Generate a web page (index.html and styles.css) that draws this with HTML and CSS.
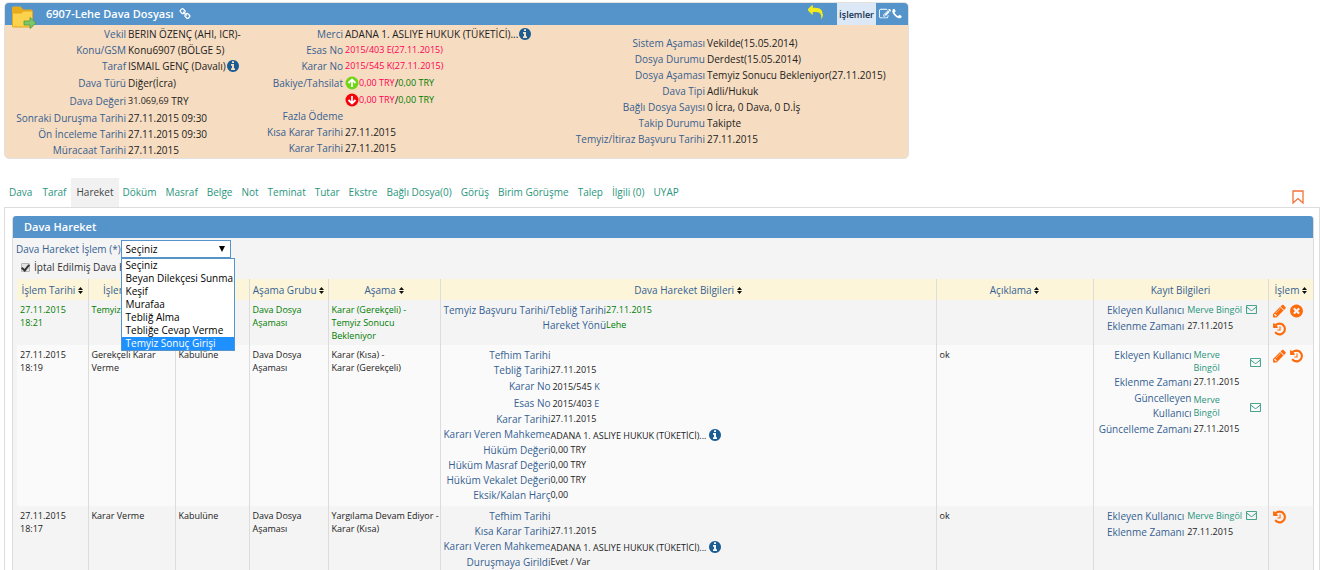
FILE: index.html
```html
<!DOCTYPE html>
<html lang="tr">
<head>
  <meta charset="UTF-8" />
  <title>6907-Lehe Dava Dosyası</title>
  <link rel="stylesheet" href="styles.css">
</head>
<body>

  <!-- Icons -->
  <svg class="sprite" xmlns="http://www.w3.org/2000/svg">
    <symbol id="i-link" viewBox="0 0 1792 1792"><path d="M1520 1216q0-40-28-68l-208-208q-28-28-68-28-42 0-72 32 3 3 19 18.5t21.5 21.5 15 19 13 25.5 3.5 27.5q0 40-28 68t-68 28q-15 0-27.5-3.5t-25.5-13-19-15-21.5-21.5-18.5-19q-33 31-33 73 0 40 28 68l206 207q27 27 68 27 40 0 68-26l147-146q28-28 28-67zm-703-705q0-40-28-68l-206-207q-28-28-68-28-39 0-68 27l-147 146q-28 28-28 67 0 40 28 68l208 208q27 27 68 27 42 0 72-31-3-3-19-18.5t-21.5-21.5-15-19-13-25.5-3.5-27.5q0-40 28-68t68-28q15 0 27.5 3.5t25.5 13 19 15 21.5 21.5 18.5 19q33-31 33-73zm895 705q0 120-85 203l-147 146q-83 83-203 83-121 0-204-85l-206-207q-83-83-83-203 0-123 88-209l-88-88q-86 88-208 88-120 0-204-84l-208-208q-84-84-84-204t85-203l147-146q83-83 203-83 121 0 204 85l206 207q83 83 83 203 0 123-88 209l88 88q86-88 208-88 120 0 204 84l208 208q84 84 84 204z"/></symbol>
    <symbol id="i-reply" viewBox="0 0 1792 1792"><path d="M1792 1120q0 166-127 451-3 7-10.5 24t-13.5 30-13 22q-12 17-28 17-15 0-23.5-10t-8.5-25q0-9 2.5-26.5t2.5-23.5q5-68 5-123 0-112-19.5-200.5t-54-153.5-89-112-117-80-145.5-48.5-166-24-187.5-7h-224v256q0 26-19 45t-45 19-45-19l-512-512q-19-19-19-45t19-45l512-512q19-19 45-19t45 19 19 45v256h224q713 0 875 403 53 134 53 333z"/></symbol>
    <symbol id="i-edit" viewBox="0 0 1792 1792"><path d="M888 1184l116-116-152-152-116 116v56h96v96h56zm440-720q-16-16-33 1l-350 350q-17 17-1 33t33-1l350-350q17-17 1-33zm80 594v190q0 119-84.500 203.500t-203.500 84.500h-832q-119 0-203.500-84.500t-84.500-203.500v-832q0-119 84.500-203.500t203.500-84.500h832q63 0 117 25 15 7 18 23 3 17-9 29l-49 49q-14 14-32 8-23-6-45-6h-832q-66 0-113 47t-47 113v832q0 66 47 113t113 47h832q66 0 113-47t47-113v-126q0-13 9-22l64-64q15-15 35-7t20 29zm-96-738l288 288-672 672h-288v-288zm444 132l-92 92-288-288 92-92q28-28 68-28t68 28l152 152q28 28 28 68t-28 68z"/></symbol>
    <symbol id="i-phone" viewBox="0 0 1792 1792"><path d="M1600 1240q0 27-10 70.500t-21 68.500q-21 50-122 106-94 51-186 51-27 0-53-3.500t-57.500-12.500-47-14.500-55.500-20.500-49-18q-98-35-175-83-127-79-264-216t-216-264q-48-77-83-175-3-9-18-49t-20.500-55.500-14.500-47-12.500-57.500-3.500-53q0-92 51-186 56-101 106-122 25-11 68.500-21t70.500-10q14 0 21 3 18 6 53 76 11 19 30 54t35 63.500 31 53.500q3 4 17.500 25t21.500 35.500 7 28.500q0 20-28.500 50t-62 55-62 53-28.500 46q0 9 5 22.500t8.500 20.500 14 24 11.500 19q76 137 174 235t235 174q2 1 19 11.500t24 14 20.500 8.500 22.500 5q18 0 46-28.500t53-62 55-62 50-28.500q14 0 28.500 7t35.500 21.500 25 17.500q25 15 53.500 31t63.500 35 54 30q70 35 76 53 3 7 3 21z"/></symbol>
    <symbol id="i-info" viewBox="0 0 1792 1792"><path d="M1152 1376v-160q0-14-9-23t-23-9h-96v-512q0-14-9-23t-23-9h-320q-14 0-23 9t-9 23v160q0 14 9 23t23 9h96v320h-96q-14 0-23 9t-9 23v160q0 14 9 23t23 9h448q14 0 23-9t9-23zm-128-896v-160q0-14-9-23t-23-9h-192q-14 0-23 9t-9 23v160q0 14 9 23t23 9h192q14 0 23-9t9-23zm640 416q0 209-103 385.500t-279.500 279.500-385.500 103-385.500-103-279.500-279.500-103-385.500 103-385.500 279.500-279.500 385.500-103 385.500 103 279.500 279.500 103 385.500z"/></symbol>
    <symbol id="i-pencil" viewBox="0 0 1792 1792"><path d="M491 1536l91-91-235-235-91 91v107h128v128h107zm523-928q0-22-22-22-10 0-17 7l-542 542q-7 7-7 17 0 22 22 22 10 0 17-7l542-542q7-7 7-17zm-54-192l416 416-832 832h-416v-416zm683 96q0 53-37 90l-166 166-416-416 166-165q36-38 90-38 53 0 91 38l235 234q37 39 37 91z"/></symbol>
    <symbol id="i-times" viewBox="0 0 1792 1792"><path d="M1277 1122q0-26-19-45l-181-181 181-181q19-19 19-45 0-27-19-46l-90-90q-19-19-46-19-26 0-45 19l-181 181-181-181q-19-19-45-19-27 0-46 19l-90 90q-19 19-19 46 0 26 19 45l181 181-181 181q-19 19-19 45 0 27 19 46l90 90q19 19 46 19 26 0 45-19l181-181 181 181q19 19 45 19 27 0 46-19l90-90q19-19 19-46zm387-226q0 209-103 385.500t-279.500 279.500-385.500 103-385.500-103-279.500-279.500-103-385.500 103-385.500 279.500-279.500 385.500-103 385.500 103 279.500 279.500 103 385.500z"/></symbol>
    <symbol id="i-history" viewBox="0 0 1792 1792"><path d="M1664 896q0 156-61 298t-164 245-245 164-298 61q-172 0-327-72.500t-264-204.500q-7-10-6.500-22.500t8.500-20.500l137-138q10-9 25-9 16 2 23 12 73 95 179 147t225 52q104 0 198.500-40.500t163.500-109.500 109.500-163.500 40.500-198.500-40.500-198.500-109.500-163.500-163.500-109.500-198.500-40.500q-98 0-188 35.500t-160 101.500l137 138q31 30 14 69-17 40-59 40h-448q-26 0-45-19t-19-45v-448q0-42 40-59 39-17 69 14l130 129q107-101 244.500-156.500t284.500-55.500q156 0 298 61t245 164 164 245 61 298zm-640-288v448q0 14-9 23t-23 9h-320q-14 0-23-9t-9-23v-64q0-14 9-23t23-9h224v-352q0-14 9-23t23-9h64q14 0 23 9t9 23z"/></symbol>
    <symbol id="i-up" viewBox="0 0 14 14"><circle cx="7" cy="7" r="6.500"/><path d="M7 11V4M3.500 7L7 3.500 10.500 7" fill="none" stroke="#fff" stroke-width="1.800"/></symbol>
    <symbol id="i-down" viewBox="0 0 14 14"><circle cx="7" cy="7" r="6.500"/><path d="M7 3v7M3.500 7L7 10.500 10.500 7" fill="none" stroke="#fff" stroke-width="1.800"/></symbol>
    <symbol id="i-mail" viewBox="0 0 12 10"><path d="M.5.5h11v9H.5zM1 2.500l4 3.200q1 .8 2 0l4-3.200" fill="none" stroke="currentColor"/></symbol>
    <symbol id="i-sort" viewBox="0 0 5 7"><path d="M0 3L2.500 0 5 3zM0 4h5L2.500 7z"/></symbol>
    <symbol id="i-bookmark" viewBox="0 0 12 14"><path d="M1 1h10v12L6 8.500 1 13z" fill="none" stroke="currentColor" stroke-width="1.300"/></symbol>
    <symbol id="i-folder" viewBox="0 0 26 24">
      <path d="M1 3q0-1.500 1.500-1.500h7l2.500 3h8q1.500 0 1.500 1.500v15H1z" fill="#e9ad1c"/>
      <path d="M1.500 8h8.500l2.500-2h9v15q0 1-1 1h-18q-1 0-1-1z" fill="#fdd34e" stroke="#e2a51b"/>
      <path d="M13 16h6v-3.500l6 5.500-6 5.500v-3.500h-6z" fill="#7ec768" stroke="#4c9a47" stroke-width=".8"/>
    </symbol>
  </svg>

  <!-- Dosya özeti -->
  <section class="card">
    <header class="bar card-bar">
      <svg class="folder"><use href="#i-folder"/></svg>
      <h1>6907-Lehe Dava Dosyası</h1>
      <a href="#" title="Bağlantı"><svg class="icon"><use href="#i-link"/></svg></a>
      <div class="card-tools">
        <a href="#" class="back" title="Geri"><svg class="icon big"><use href="#i-reply"/></svg></a>
        <button type="button" class="menu-btn">İşlemler</button>
        <a href="#" title="Düzenle"><svg class="icon"><use href="#i-edit"/></svg></a>
        <a href="#" title="Ara"><svg class="icon"><use href="#i-phone"/></svg></a>
      </div>
    </header>
    <div class="card-body">
      <dl class="fields">
        <div><dt>Vekil</dt><dd>BERIN ÖZENÇ (AHI, ICR)-</dd></div>
        <div><dt>Konu/GSM</dt><dd>Konu6907 (BÖLGE 5)</dd></div>
        <div><dt>Taraf</dt><dd>ISMAIL GENÇ (Davalı) <svg class="icon info"><use href="#i-info"/></svg></dd></div>
        <div class="tall"><dt>Dava Türü</dt><dd>Diğer(İcra)</dd></div>
        <div class="tall"><dt>Dava Değeri</dt><dd><small>31.069,69</small>&nbsp;TRY</dd></div>
        <div><dt>Sonraki Duruşma Tarihi</dt><dd>27.11.2015 09:30</dd></div>
        <div><dt>Ön İnceleme Tarihi</dt><dd>27.11.2015 09:30</dd></div>
        <div><dt>Müracaat Tarihi</dt><dd>27.11.2015</dd></div>
      </dl>
      <dl class="fields fields-mid">
        <div><dt>Merci</dt><dd>ADANA 1. ASLIYE HUKUK (TÜKETİCİ)...<svg class="icon info"><use href="#i-info"/></svg></dd></div>
        <div><dt>Esas No</dt><dd class="pink"><small>2015/403 E(27.11.2015)</small></dd></div>
        <div><dt>Karar No</dt><dd class="pink"><small>2015/545 K(27.11.2015)</small></dd></div>
        <div class="tall"><dt>Bakiye/Tahsilat</dt><dd><svg class="icon info up"><use href="#i-up"/></svg><small class="pink">0,00 TRY</small>/<small class="green">0,00 TRY</small></dd></div>
        <div><dt></dt><dd><svg class="icon info down"><use href="#i-down"/></svg><small class="pink">0,00 TRY</small>/<small class="green">0,00 TRY</small></dd></div>
        <div><dt>Fazla Ödeme</dt><dd></dd></div>
        <div><dt>Kısa Karar Tarihi</dt><dd>27.11.2015</dd></div>
        <div><dt>Karar Tarihi</dt><dd>27.11.2015</dd></div>
      </dl>
      <dl class="fields fields-end">
        <div><dt>Sistem Aşaması</dt><dd>Vekilde(15.05.2014)</dd></div>
        <div><dt>Dosya Durumu</dt><dd>Derdest(15.05.2014)</dd></div>
        <div><dt>Dosya Aşaması</dt><dd>Temyiz Sonucu Bekleniyor(27.11.2015)</dd></div>
        <div><dt>Dava Tipi</dt><dd>Adli/Hukuk</dd></div>
        <div><dt>Bağlı Dosya Sayısı</dt><dd>0 İcra, 0 Dava, 0 D.İş</dd></div>
        <div><dt>Takip Durumu</dt><dd>Takipte</dd></div>
        <div><dt>Temyiz/İtiraz Başvuru Tarihi</dt><dd>27.11.2015</dd></div>
      </dl>
    </div>
  </section>

  <!-- Sekmeler -->
  <nav class="tabs">
    <a href="#">Dava</a>
    <a href="#">Taraf</a>
    <a href="#" class="active">Hareket</a>
    <a href="#">Döküm</a>
    <a href="#">Masraf</a>
    <a href="#">Belge</a>
    <a href="#">Not</a>
    <a href="#">Teminat</a>
    <a href="#">Tutar</a>
    <a href="#">Ekstre</a>
    <a href="#">Bağlı Dosya(0)</a>
    <a href="#">Görüş</a>
    <a href="#">Birim Görüşme</a>
    <a href="#">Talep</a>
    <a href="#">İlgili (0)</a>
    <a href="#">UYAP</a>
    <a href="#" class="bookmark" title="İşaretle"><svg><use href="#i-bookmark"/></svg></a>
  </nav>

  <main class="pane">
    <section class="panel">
      <header class="bar"><h2>Dava Hareket</h2></header>

      <form class="filter">
        <div class="filter-row">
          <label for="islem">Dava Hareket İşlem (*)</label>
          <div class="combo">
            <select id="islem">
              <option>Seçiniz</option>
              <option>Beyan Dilekçesi Sunma</option>
              <option>Keşif</option>
              <option>Murafaa</option>
              <option>Tebliğ Alma</option>
              <option>Tebliğe Cevap Verme</option>
              <option>Temyiz Sonuç Girişi</option>
            </select>
            <ul class="combo-list" role="listbox">
              <li role="option">Seçiniz</li>
              <li role="option">Beyan Dilekçesi Sunma</li>
              <li role="option">Keşif</li>
              <li role="option">Murafaa</li>
              <li role="option">Tebliğ Alma</li>
              <li role="option">Tebliğe Cevap Verme</li>
              <li role="option" class="hover" aria-selected="true">Temyiz Sonuç Girişi</li>
            </ul>
          </div>
        </div>
        <div class="filter-row check">
          <input type="checkbox" id="iptal" checked />
          <label for="iptal">İptal Edilmiş Dava Hareketleri</label>
        </div>
      </form>

      <table class="grid">
        <colgroup>
          <col class="c-date"><col class="c-op"><col class="c-res"><col class="c-group"><col class="c-stage">
          <col><col class="c-note"><col class="c-log"><col class="c-act">
        </colgroup>
        <thead>
          <tr>
            <th>İşlem Tarihi <svg class="sort"><use href="#i-sort"/></svg></th>
            <th>İşlem Türü <svg class="sort"><use href="#i-sort"/></svg></th>
            <th>Sonucu <svg class="sort"><use href="#i-sort"/></svg></th>
            <th>Aşama Grubu <svg class="sort"><use href="#i-sort"/></svg></th>
            <th>Aşama <svg class="sort"><use href="#i-sort"/></svg></th>
            <th>Dava Hareket Bilgileri <svg class="sort"><use href="#i-sort"/></svg></th>
            <th>Açıklama <svg class="sort"><use href="#i-sort"/></svg></th>
            <th>Kayıt Bilgileri</th>
            <th>İşlem <svg class="sort"><use href="#i-sort"/></svg></th>
          </tr>
        </thead>
        <tbody>
          <tr class="new">
            <td>27.11.2015 18:21</td>
            <td>Temyiz</td>
            <td></td>
            <td>Dava Dosya Aşaması</td>
            <td>Karar (Gerekçeli) -<br>Temyiz Sonucu<br>Bekleniyor</td>
            <td>
              <dl class="detail">
                <dt>Temyiz Başvuru Tarihi/Tebliğ Tarihi</dt><dd>27.11.2015</dd>
                <dt>Hareket Yönü</dt><dd>Lehe</dd>
              </dl>
            </td>
            <td></td>
            <td>
              <dl class="log">
                <dt>Ekleyen Kullanıcı</dt><dd class="user"><a href="#">Merve Bingöl</a><svg class="mail"><use href="#i-mail"/></svg></dd>
                <dt>Eklenme Zamanı</dt><dd>27.11.2015</dd>
              </dl>
            </td>
            <td>
              <div class="acts">
                <a href="#" title="Düzenle"><svg><use href="#i-pencil"/></svg></a>
                <a href="#" title="İptal"><svg><use href="#i-times"/></svg></a>
                <a href="#" title="Geçmiş"><svg><use href="#i-history"/></svg></a>
              </div>
            </td>
          </tr>
          <tr>
            <td>27.11.2015 18:19</td>
            <td>Gerekçeli Karar Verme</td>
            <td>Kabulüne</td>
            <td>Dava Dosya Aşaması</td>
            <td>Karar (Kısa) -<br>Karar (Gerekçeli)</td>
            <td>
              <dl class="detail">
                <dt>Tefhim Tarihi</dt><dd></dd>
                <dt>Tebliğ Tarihi</dt><dd>27.11.2015</dd>
                <dt class="no">Karar No</dt><dd class="no">2015/545 <b>K</b></dd>
                <dt class="no">Esas No</dt><dd class="no">2015/403 <b>E</b></dd>
                <dt>Karar Tarihi</dt><dd>27.11.2015</dd>
                <dt>Kararı Veren Mahkeme</dt><dd class="court">ADANA 1. ASLIYE HUKUK (TÜKETİCİ)...<svg class="icon info"><use href="#i-info"/></svg></dd>
                <dt>Hüküm Değeri</dt><dd>0,00 TRY</dd>
                <dt>Hüküm Masraf Değeri</dt><dd>0,00 TRY</dd>
                <dt>Hüküm Vekalet Değeri</dt><dd>0,00 TRY</dd>
                <dt>Eksik/Kalan Harç</dt><dd>0,00</dd>
              </dl>
            </td>
            <td>ok</td>
            <td>
              <dl class="log wide">
                <dt>Ekleyen Kullanıcı</dt><dd class="user"><a href="#">Merve Bingöl</a><svg class="mail"><use href="#i-mail"/></svg></dd>
                <dt>Eklenme Zamanı</dt><dd>27.11.2015</dd>
                <dt>Güncelleyen Kullanıcı</dt><dd class="user"><a href="#">Merve Bingöl</a><svg class="mail"><use href="#i-mail"/></svg></dd>
                <dt>Güncelleme Zamanı</dt><dd>27.11.2015</dd>
              </dl>
            </td>
            <td>
              <div class="acts">
                <a href="#" title="Düzenle"><svg><use href="#i-pencil"/></svg></a>
                <a href="#" title="Geçmiş"><svg><use href="#i-history"/></svg></a>
              </div>
            </td>
          </tr>
          <tr>
            <td>27.11.2015 18:17</td>
            <td>Karar Verme</td>
            <td>Kabulüne</td>
            <td>Dava Dosya Aşaması</td>
            <td>Yargılama Devam Ediyor -<br>Karar (Kısa)</td>
            <td>
              <dl class="detail">
                <dt>Tefhim Tarihi</dt><dd></dd>
                <dt>Kısa Karar Tarihi</dt><dd>27.11.2015</dd>
                <dt>Kararı Veren Mahkeme</dt><dd class="court">ADANA 1. ASLIYE HUKUK (TÜKETİCİ)...<svg class="icon info"><use href="#i-info"/></svg></dd>
                <dt>Duruşmaya Girildi</dt><dd>Evet / Var</dd>
              </dl>
            </td>
            <td>ok</td>
            <td>
              <dl class="log">
                <dt>Ekleyen Kullanıcı</dt><dd class="user"><a href="#">Merve Bingöl</a><svg class="mail"><use href="#i-mail"/></svg></dd>
                <dt>Eklenme Zamanı</dt><dd>27.11.2015</dd>
              </dl>
            </td>
            <td>
              <div class="acts">
                <a href="#" title="Geçmiş"><svg><use href="#i-history"/></svg></a>
              </div>
            </td>
          </tr>
        </tbody>
      </table>
    </section>
  </main>

</body>
</html>
```
FILE: styles.css
```css
* {
  box-sizing: border-box;
}

body {
  margin: 0;
  padding: 2px 0 0 4px;
  height: 100vh;
  overflow: hidden;
  background: #fff;
  color: #222;
  font: 10px/16px "Open Sans", "Noto Sans", sans-serif;
}

h1, h2, dl, dd, ul {
  margin: 0;
  padding: 0;
}

a {
  color: #2a957c;
  text-decoration: none;
}

small {
  font-size: 9px;
}

.sprite {
  position: absolute;
  width: 0;
  height: 0;
}

.icon {
  width: 12px;
  height: 12px;
  fill: currentColor;
  vertical-align: middle;
}

.info {
  width: 14px;
  height: 14px;
  fill: #1b5c92;
}

.up { fill: #6fd616; }
.down { fill: #fb0007; }
.pink { color: #ff0055; }
.green { color: #007d00; }

/* Mavi başlık */
.bar {
  display: flex;
  align-items: center;
  height: 22px;
  background: #5594cb;
  color: #fff;
}

.bar h1,
.bar h2 {
  font-size: 11px;
  font-weight: 600;
}

.bar a {
  display: flex;
  color: #fff;
}

/* Dosya özeti */
.card {
  width: 69%;
  max-width: 905px;
  background: #f6dcc0;
  border: 1px solid #e2e2e2;
  border-radius: 5px;
  overflow: hidden;
}

.card-bar {
  gap: 5px;
  padding-left: 6px;
}

.folder {
  align-self: flex-start;
  flex: none;
  width: 26px;
  height: 24px;
  margin: 2px 4px 0 0;
  position: relative;
  z-index: 1;
}

.card-tools {
  display: flex;
  align-items: center;
  align-self: stretch;
  margin-left: auto;
  padding-right: 5px;
}

.bar .back {
  color: #f2ec1c;
  margin: 0 14px 4px 0;
}

.big {
  width: 15px;
  height: 15px;
}

.menu-btn {
  align-self: stretch;
  margin-right: 3px;
  padding: 0 1px;
  width: 39px;
  border: 0;
  background: #dce8f5;
  color: #16324f;
  font: 600 9px "Open Sans", "Noto Sans", sans-serif;
}

.card-body {
  display: grid;
  grid-template-columns: 240px 325px 1fr;
  padding-top: 1px;
}

.fields > div {
  display: grid;
  grid-template-columns: 121px 1fr;
  column-gap: 2px;
  height: 16px;
}

.fields > .tall {
  height: 18px;
  line-height: 18px;
}

.fields dt {
  color: #365f92;
  white-space: nowrap;
  justify-self: end;
}

.fields dd {
  display: flex;
  align-items: center;
  white-space: nowrap;
}

.fields .info {
  flex: none;
}

.fields-mid > div {
  grid-template-columns: 98px 1fr;
}

.fields-end {
  padding-top: 9px;
}

.fields-end > div {
  grid-template-columns: 135px 1fr;
}

/* Sekmeler */
.tabs {
  display: flex;
  align-items: flex-end;
  margin-top: 19px;
}

.tabs a {
  padding: 0 5px;
  line-height: 29px;
}

.tabs .active {
  background: #f1f1f1;
  color: #444;
}

.tabs .active ~ a {
  padding-left: 4px;
}

.tabs .bookmark {
  display: flex;
  margin-left: auto;
  padding: 0 16px 3px 0;
  color: #f4713a;
}

.bookmark svg {
  width: 12px;
  height: 14px;
}

.pane {
  padding: 8px 5px 8px 7px;
  border: 1px solid #dcdcdc;
}

.panel {
  background: #f4f4f4;
  border: 1px solid #dcdcdc;
  border-top: 0;
  border-radius: 4px 4px 0 0;
}

.panel .bar {
  padding-left: 11px;
  border-radius: 3px 3px 0 0;
}

.filter {
  padding: 2px 3px 3px;
}

.filter label {
  color: #365f92;
}

.filter-row {
  display: flex;
  align-items: center;
  height: 18px;
}

.filter .check {
  gap: 4px;
}

.filter .check label {
  color: #333;
}

.check input {
  display: flex;
  align-items: center;
  justify-content: center;
  width: 9px;
  height: 9px;
  margin: 1px 0 0 5px;
  appearance: none;
  border: 1px solid #b4b4b4;
  border-radius: 1px;
  background: #e4e4e4;
}

.check input:checked::after {
  content: "";
  width: 3px;
  height: 6px;
  margin-bottom: 2px;
  border: solid #333;
  border-width: 0 2px 2px 0;
  transform: rotate(40deg);
}

.combo {
  position: relative;
}

.combo select {
  display: block;
  width: 110px;
  height: 18px;
  padding: 0 4px;
  appearance: none;
  border: 1px solid #5594cb;
  border-radius: 0;
  background: #fff;
  color: #000;
  font: 10px "Open Sans", "Noto Sans", sans-serif;
}

.combo::after {
  content: "";
  position: absolute;
  top: 6px;
  right: 6px;
  border: 3px solid transparent;
  border-top: 6px solid #000;
  border-bottom: 0;
}

.combo-list {
  position: absolute;
  top: 18px;
  left: 0;
  z-index: 2;
  min-width: 112px;
  border: 1px solid #5594cb;
  background: #fff;
  color: #000;
  list-style: none;
  line-height: 13px;
  white-space: nowrap;
}

.combo-list li {
  padding: 0 1px 0 4px;
}

.combo-list .hover {
  background: #1e90ff;
  color: #fff;
}

/* Tablo */
.grid {
  width: calc(100% - 4px);
  margin-left: 4px;
  border-collapse: collapse;
  table-layout: fixed;
}

.c-date { width: 71px; }
.c-op { width: 87px; }
.c-res { width: 74px; }
.c-group { width: 79px; }
.c-stage { width: 112px; }
.c-note { width: 157px; }
.c-log { width: 175px; }
.c-act { width: 45px; }

.grid th {
  height: 21px;
  padding: 0;
  background: #fcf5da;
  color: #365f92;
  font-weight: 400;
  white-space: nowrap;
}

.sort {
  width: 5px;
  height: 7px;
  fill: #111;
}

.grid th,
.grid td {
  border-right: 1px solid #dcdcdc;
}

.grid th:last-child,
.grid td:last-child {
  border-right: 0;
}

.grid td {
  padding: 3px 0 3px 3px;
  vertical-align: top;
  font-size: 9px;
  line-height: 13px;
}

.grid tbody tr:nth-child(even) {
  background: #fafafa;
}

.grid .new {
  color: #007d00;
}

.detail {
  display: grid;
  grid-template-columns: max-content 1fr;
}

.detail dt,
.log dt {
  color: #365f92;
  font-size: 10px;
  line-height: 15px;
  text-align: right;
}

.detail .no {
  line-height: 17px;
}

.detail dd.no {
  padding-left: 2px;
}

.detail b {
  color: #365f92;
  font-weight: 400;
}

.detail .court {
  display: flex;
  align-items: center;
  gap: 2px;
  height: 16px;
}

.log {
  display: grid;
  grid-template-columns: max-content max-content;
  justify-content: center;
  column-gap: 3px;
  row-gap: 1px;
}

.log dd {
  color: #222;
}

.log .user {
  display: flex;
  gap: 4px;
}

.log.wide {
  grid-template-columns: 95px 67px;
  justify-content: start;
  column-gap: 2px;
}

.wide .user {
  justify-content: space-between;
  align-items: center;
}

.wide .user a {
  width: 40px;
}

.mail {
  flex: none;
  width: 11px;
  height: 9px;
  margin-top: 2px;
  color: #2a957c;
}

.acts {
  display: flex;
  flex-wrap: wrap;
  gap: 2px;
}

.acts a {
  display: flex;
  color: #ff6a0a;
}

.acts svg {
  width: 15px;
  height: 16px;
  fill: currentColor;
}
```
